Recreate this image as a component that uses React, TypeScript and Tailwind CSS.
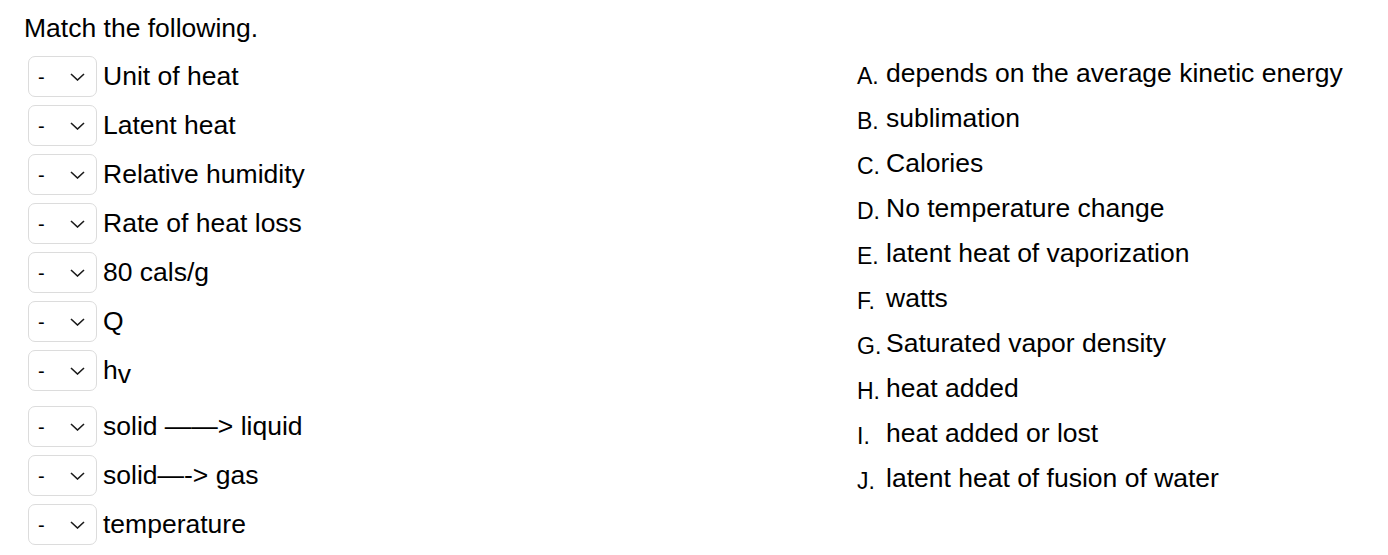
const prompts: { label: React.ReactNode; extra?: boolean }[] = [
  { label: "Unit of heat" },
  { label: "Latent heat" },
  { label: "Relative humidity" },
  { label: "Rate of heat loss" },
  { label: "80 cals/g" },
  { label: "Q" },
  {
    label: (
      <>
        h<span className="relative top-[4px]">v</span>
      </>
    ),
    extra: true,
  },
  { label: "solid \u2014\u2014> liquid" },
  { label: "solid\u2014-> gas" },
  { label: "temperature" },
];

const answers = [
  ["A.", "depends on the average kinetic energy"],
  ["B.", "sublimation"],
  ["C.", "Calories"],
  ["D.", "No temperature change"],
  ["E.", "latent heat of vaporization"],
  ["F.", "watts"],
  ["G.", "Saturated vapor density"],
  ["H.", "heat added"],
  ["I.", "heat added or lost"],
  ["J.", "latent heat of fusion of water"],
];

function Dropdown() {
  return (
    <div className="flex h-[41px] w-[69px] shrink-0 items-center justify-between rounded-[7px] border-[1.5px] border-[#dcdcdc] bg-white pl-[9px] pr-[11px]">
      <span className="text-[20px] leading-none">-</span>
      <svg width="15" height="8" viewBox="0 0 15 8" fill="none">
        <polyline points="1,1 7.5,7 14,1" stroke="#1a1a1a" strokeWidth="1.6" />
      </svg>
    </div>
  );
}

export default function App() {
  return (
    <div
      className="h-[555px] w-[1388px] bg-white px-[24px] pt-[13px] text-black"
      style={{ fontFamily: '"Liberation Sans", Arial, sans-serif' }}
    >
      <h1 className="text-[26.5px] leading-[30px]">Match the following.</h1>

      <div className="flex">
        {/* prompts with their dropdowns */}
        <div className="mt-[13px] w-[833px] pl-[4px]">
          {prompts.map((p, i) => (
            <div key={i} className={`flex items-center gap-[6px] ${p.extra ? "mb-[15px]" : "mb-[8px]"}`}>
              <Dropdown />
              <span className="text-[26.5px] leading-none">{p.label}</span>
            </div>
          ))}
        </div>

        {/* lettered answer list */}
        <div className="mt-[8px]">
          {answers.map(([letter, text]) => (
            <div key={letter} className="h-[45px] whitespace-nowrap text-[26.5px] leading-[45px]">
              <span className="relative top-[2px] inline-block w-[29px] text-[23px]">{letter}</span>
              <span>{text}</span>
            </div>
          ))}
        </div>
      </div>
    </div>
  );
}
